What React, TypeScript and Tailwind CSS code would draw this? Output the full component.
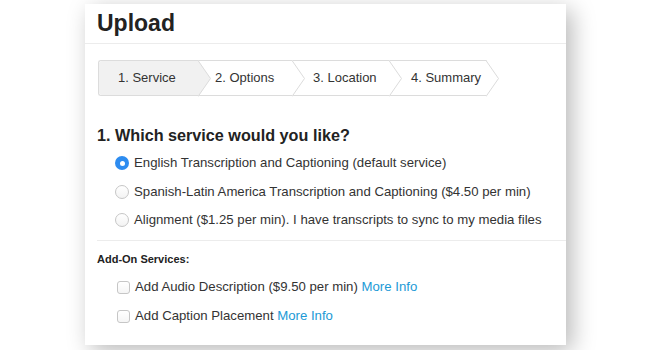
import React from "react";

function Chevron({ fill }: { fill: string }) {
  return (
    <svg
      className="absolute top-[-1px] left-full z-10"
      width="14"
      height="37"
      viewBox="0 0 14 37"
    >
      <polygon points="0,0 12.5,18.5 0,37" fill={fill} />
      <polyline points="0,0.5 12.5,18.5 0,36.5" fill="none" stroke="#dcdcdc" strokeWidth="1" />
    </svg>
  );
}

function Radio({ checked }: { checked?: boolean }) {
  if (checked) {
    return (
      <span className="flex h-[14px] w-[14px] shrink-0 items-center justify-center rounded-full bg-[#2d8cf0]">
        <span className="h-[5px] w-[5px] rounded-full bg-white" />
      </span>
    );
  }
  return (
    <span className="block h-[14px] w-[14px] shrink-0 rounded-full border border-[#c6c6c6] bg-gradient-to-b from-white to-[#f3f3f3]" />
  );
}

function Check() {
  return (
    <span className="block h-[13px] w-[13px] shrink-0 rounded-[3px] border border-[#c6c6c6] bg-gradient-to-b from-white to-[#f5f5f5]" />
  );
}

export default function App() {
  const steps = [
    { label: "1. Service", w: "w-[99px]", pl: "pl-[19px]", active: true },
    { label: "2. Options", w: "w-[94px]", pl: "pl-[17px]", active: false },
    { label: "3. Location", w: "w-[97px]", pl: "pl-[21px]", active: false },
    { label: "4. Summary", w: "w-[97px]", pl: "pl-[22px]", active: false },
  ];
  const radios = [
    { label: "English Transcription and Captioning (default service)", checked: true },
    { label: "Spanish-Latin America Transcription and Captioning ($4.50 per min)" },
    { label: "Alignment ($1.25 per min). I have transcripts to sync to my media files" },
  ];
  return (
    <div
      className="h-[350px] w-[650px] overflow-hidden bg-white pt-[4px] pl-[85px]"
      style={{ fontFamily: '"Liberation Sans", Arial, sans-serif' }}
    >
      <div className="h-[341px] w-[481px] bg-white text-[#222] shadow-[6px_6px_22px_rgba(0,0,0,0.28)]">
        <div className="flex h-[40px] items-center border-b border-[#ececec] pl-[12px]">
          <h1 className="text-[23px] font-bold leading-none text-[#222]">Upload</h1>
        </div>
        <div className="pl-[13px] pt-[16px]">
          <div className="flex h-[36px] w-[389px] rounded-l-[3px] border-y border-l border-[#dcdcdc]">
            {steps.map((s) => (
              <div
                key={s.label}
                className={`relative flex items-center whitespace-nowrap ${s.w} ${s.pl} text-[13px] text-[#333] ${
                  s.active ? "rounded-l-[3px] bg-[#f1f1f1]" : "bg-white"
                }`}
              >
                {s.label}
                <Chevron fill={s.active ? "#f1f1f1" : "#ffffff"} />
              </div>
            ))}
          </div>
        </div>
        <h2 className="pl-[12px] pt-[31px] text-[16.2px] font-bold leading-none text-[#222]">
          1. Which service would you like?
        </h2>
        <div className="flex flex-col gap-[14.5px] pl-[30px] pt-[13px]">
          {radios.map((r) => (
            <label
              key={r.label}
              className="flex items-center gap-[5px] whitespace-nowrap text-[13.2px] leading-[14px] text-[#333]"
            >
              <Radio checked={r.checked} />
              <span>{r.label}</span>
            </label>
          ))}
        </div>
        <div className="ml-[12px] mt-[13px] border-t border-[#ececec]" />
        <div className="pl-[12px] pt-[13px] text-[11px] font-bold leading-none text-[#222]">Add-On Services:</div>
        <div className="flex flex-col gap-[15px] pl-[32px] pt-[15px]">
          <label className="flex items-center gap-[5px] whitespace-nowrap text-[13.2px] leading-[14px] text-[#333]">
            <Check />
            <span>
              Add Audio Description ($9.50 per min) <span className="text-[#1c9ad6]">More Info</span>
            </span>
          </label>
          <label className="flex items-center gap-[5px] whitespace-nowrap text-[13.2px] leading-[14px] text-[#333]">
            <Check />
            <span>
              Add Caption Placement <span className="text-[#1c9ad6]">More Info</span>
            </span>
          </label>
        </div>
      </div>
    </div>
  );
}
